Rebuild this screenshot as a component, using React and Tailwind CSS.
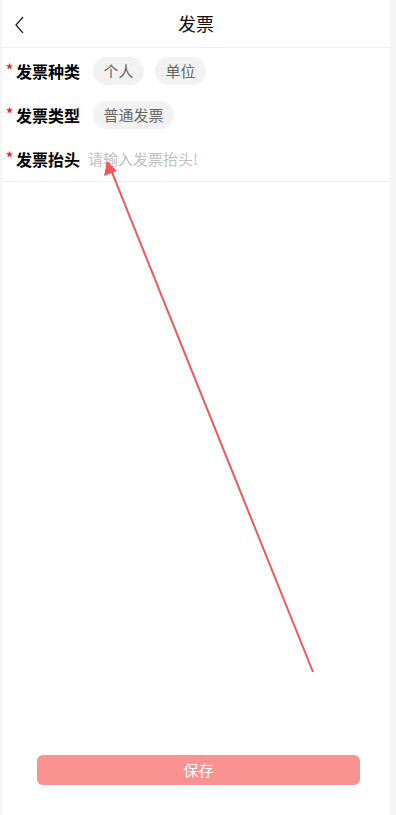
import React from 'react';

const font = { fontFamily: '"Noto Sans CJK SC", "Noto Sans", sans-serif' };

const Chip = ({ children }) => (
  <span className="h-[28px] px-[10.5px] rounded-full bg-[#f2f2f2] text-[#666666] text-[15px] flex items-center">
    {children}
  </span>
);

const Star = () => (
  <span className="text-[#e5262b] text-[14px] font-bold w-[10px] -mt-[3px]">*</span>
);

const Row = ({ label, children }) => (
  <div className="flex items-center h-[44px] pl-[4px]">
    <Star />
    <span className="text-[16px] font-bold text-black w-[77px]">{label}</span>
    <div className="flex items-center gap-[11px]">{children}</div>
  </div>
);

export default function App() {
  return (
    <div className="relative w-[396px] h-[815px] bg-[#f5f5f5] flex pl-[2px] pr-[6px]" style={font}>
      <div className="flex-1 bg-white flex flex-col">
        {/* Header */}
        <header className="h-[48px] flex items-center relative border-b border-[#f0f0f0]">
          <svg className="absolute left-[12px] top-[16px]" width="12" height="18" viewBox="0 0 12 18">
            <path d="M9 1 L2 9 L9 17" fill="none" stroke="#222" strokeWidth="1.3" />
          </svg>
          <h1 className="flex-1 text-center text-[18px] text-[#111]">发票</h1>
        </header>

        {/* Form */}
        <div className="pt-[1px] flex flex-col">
          <Row label="发票种类">
            <Chip>个人</Chip>
            <Chip>单位</Chip>
          </Row>
          <Row label="发票类型">
            <Chip>普通发票</Chip>
          </Row>
          <div className="flex items-center h-[45px] pl-[4px] border-b border-[#f0f0f0]">
            <Star />
            <span className="text-[16px] font-bold text-black w-[72px]">发票抬头</span>
            <input
              className="flex-1 outline-none text-[15px] placeholder:text-[#bfbfbf] bg-transparent"
              placeholder="请输入发票抬头!"
              style={font}
            />
          </div>
        </div>

        <div className="flex-1" />

        <div className="pl-[35px] pr-[30px] pb-[30px]">
          <button className="w-full h-[30px] rounded-[6px] bg-[#f99391] text-white text-[15px]">保存</button>
        </div>
      </div>

      {/* annotation arrow */}
      <svg className="absolute left-0 top-0 pointer-events-none" width="396" height="815" viewBox="0 0 396 815">
        <path d="M313 672 L111 170 L108 163" fill="none" stroke="#f0575a" strokeWidth="2" />
        <path d="M107 161 L104 176 L117 171 Z" fill="#f0575a" />
      </svg>
    </div>
  );
}
